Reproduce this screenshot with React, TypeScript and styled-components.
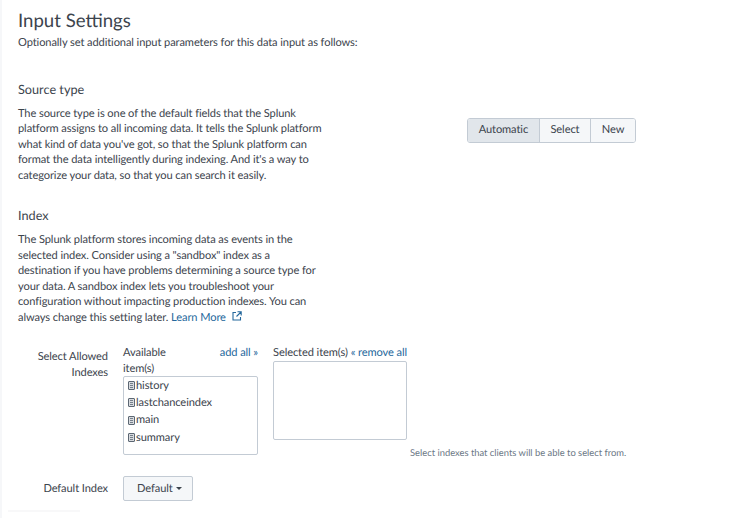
import React from 'react';
import styled, { createGlobalStyle } from 'styled-components';

const GlobalStyle = createGlobalStyle`
  html, body {
    margin: 0;
    height: 518px;
    overflow: hidden;
    background: #fff;
    font-family: Lato, "Liberation Sans", sans-serif;
    color: #3c444d;
    text-rendering: geometricPrecision;
  }
`;

const indexes = ['history', 'lastchanceindex', 'main', 'summary'];

const IndexIcon = () => (
  <svg width="7" height="9" viewBox="0 0 7 9">
    <rect x="0.5" y="0.5" width="6" height="8" rx="0.5" fill="#d8dbdf" stroke="#5c6773" />
    <path d="M2 2.5h3M2 4.5h3M2 6.5h3" stroke="#5c6773" strokeWidth="0.8" />
  </svg>
);

const ExternalIcon = () => (
  <svg width="10" height="10" viewBox="0 0 10 10" fill="none" stroke="#25689c" strokeWidth="1.1">
    <path d="M4 1.5H1v7.5h7.5V6" />
    <path d="M5.5 0.8h3.7v3.7M9 1L4.5 5.5" />
  </svg>
);

export default function App() {
  return (
    <>
      <GlobalStyle />
      <Page>
        <Title>Input Settings</Title>
        <Intro>Optionally set additional input parameters for this data input as follows:</Intro>

        <SourceSection>
          <SourceText>
            <SectionTitle>Source type</SectionTitle>
            <Body>
              The source type is one of the default fields that the Splunk<br />
              platform assigns to all incoming data. It tells the Splunk platform<br />
              what kind of data you've got, so that the Splunk platform can<br />
              format the data intelligently during indexing. And it's a way to<br />
              categorize your data, so that you can search it easily.
            </Body>
          </SourceText>
          <ButtonGroup>
            <GroupButton $active>Automatic</GroupButton>
            <GroupButton>Select</GroupButton>
            <GroupButton>New</GroupButton>
          </ButtonGroup>
        </SourceSection>

        <IndexSection>
          <SectionTitle>Index</SectionTitle>
          <Body>
            The Splunk platform stores incoming data as events in the<br />
            selected index. Consider using a "sandbox" index as a<br />
            destination if you have problems determining a source type for<br />
            your data. A sandbox index lets you troubleshoot your<br />
            configuration without impacting production indexes. You can<br />
            always change this setting later. <DocLink>Learn More <ExternalIcon /></DocLink>
          </Body>
        </IndexSection>

        <AllowedRow>
          <FieldLabel>Select Allowed Indexes</FieldLabel>
          <PickerColumn>
            <PickerHead>
              <AvailableTitle>Available item(s)</AvailableTitle>
              <ActionLink>add all »</ActionLink>
            </PickerHead>
            <ItemBox>
              {indexes.map((name) => (
                <IndexItem key={name}>
                  <IndexIcon />
                  {name}
                </IndexItem>
              ))}
            </ItemBox>
          </PickerColumn>
          <SelectedColumn>
            <SelectedHead>
              <span>Selected item(s)</span>
              <ActionLink>« remove all</ActionLink>
            </SelectedHead>
            <ItemBox />
            <HelpText>Select indexes that clients will be able to select from.</HelpText>
          </SelectedColumn>
        </AllowedRow>

        <DefaultRow>
          <DefaultLabel>Default Index</DefaultLabel>
          <DefaultButton>
            Default <Caret />
          </DefaultButton>
        </DefaultRow>
        <FooterTrace />
      </Page>
    </>
  );
}

const Page = styled.div`
  box-sizing: border-box;
  height: 518px;
  padding: 9px 0 0 16px;
  border-left: 2px solid #f6f7f9;
  font-size: 11.1px;
  letter-spacing: -0.1px;
  line-height: 15.5px;
`;
const Title = styled.h2`
  margin: 0;
  font-size: 18.6px;
  letter-spacing: 0;
  line-height: 23px;
  font-weight: 400;
  color: #3c444d;
`;
const Intro = styled.p`
  margin: 3px 0 0;
`;
const SourceSection = styled.div`
  display: flex;
  align-items: flex-start;
  margin-top: 30px;
`;
const SourceText = styled.div`
  width: 320px;
`;
const SectionTitle = styled.h3`
  margin: 0 0 8px;
  font-size: 12.7px;
  letter-spacing: 0;
  line-height: 17px;
  font-weight: 400;
`;
const Body = styled.p`
  margin: 0;
  width: 320px;
  white-space: nowrap;
`;
const ButtonGroup = styled.div`
  display: flex;
  height: 25px;
  margin: 37px 0 0 129px;
  border: 1px solid #c3cbd4;
  border-radius: 3px;
  box-sizing: border-box;
  overflow: hidden;
`;
const GroupButton = styled.div<{ $active?: boolean }>`
  display: flex;
  align-items: center;
  padding: 0 10.7px;
  background: ${(p) => (p.$active ? '#e1e6eb' : '#f5f7f9')};
  color: #3c444d;
  & + & {
    border-left: 1px solid #c3cbd4;
  }
`;
const IndexSection = styled.div`
  margin-top: 24px;
`;
const DocLink = styled.a`
  color: #25689c;
  svg {
    margin-left: 3px;
  }
`;
const AllowedRow = styled.div`
  display: flex;
  align-items: flex-start;
  margin-top: 20px;
`;
const FieldLabel = styled.div`
  width: 90px;
  margin-top: 4px;
  margin-right: 15px;
  text-align: right;
`;
const DefaultLabel = styled(FieldLabel)`
  margin-top: 5px;
`;
const PickerColumn = styled.div`
  width: 135px;
`;
const PickerHead = styled.div`
  display: flex;
  justify-content: space-between;
`;
const AvailableTitle = styled.span`
  width: 60px;
`;
const ActionLink = styled.a`
  color: #25689c;
  white-space: nowrap;
`;
const ItemBox = styled.div`
  box-sizing: border-box;
  height: 79px;
  padding: 0 4px;
  border: 1px solid #c3cbd4;
  border-radius: 2px;
`;
const IndexItem = styled.div`
  display: flex;
  align-items: center;
  gap: 1px;
  height: 17.3px;
  svg {
    flex: none;
  }
`;
const SelectedColumn = styled.div`
  width: 134px;
  margin-left: 15px;
  position: relative;
`;
const SelectedHead = styled.div`
  display: flex;
  justify-content: space-between;
  white-space: nowrap;
`;
const HelpText = styled.div`
  position: absolute;
  left: 137px;
  top: 101px;
  white-space: nowrap;
  font-size: 9.4px;
  letter-spacing: 0;
  color: #6b7785;
`;
const DefaultRow = styled.div`
  display: flex;
  align-items: flex-start;
  margin-top: 21px;
`;
const DefaultButton = styled.div`
  box-sizing: border-box;
  display: flex;
  align-items: center;
  gap: 3px;
  height: 25px;
  padding: 0 10px 0 13px;
  background: #f5f7f9;
  border: 1px solid #c3cbd4;
  border-radius: 2px;
`;
const Caret = styled.span`
  width: 0;
  height: 0;
  border-left: 3px solid transparent;
  border-right: 3px solid transparent;
  border-top: 3px solid #3c444d;
`;
const FooterTrace = styled.div`
  width: 72px;
  height: 2px;
  margin: 9px 0 0 -10px;
  background: #f8f8f9;
`;
